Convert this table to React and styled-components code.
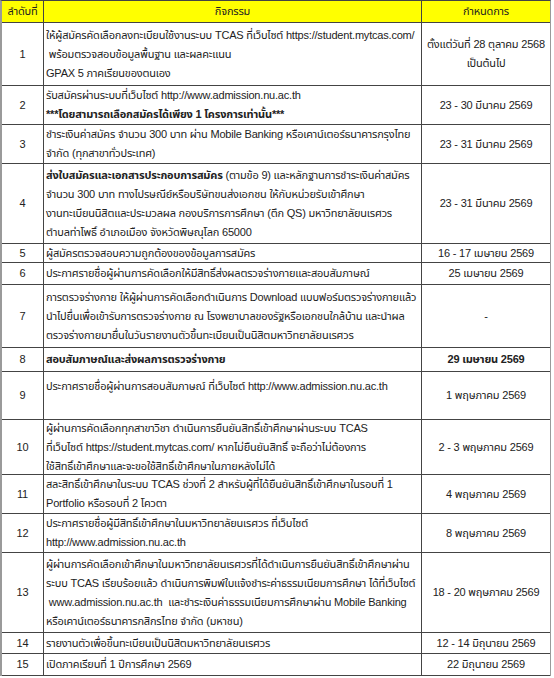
import React from 'react';
import styled, { createGlobalStyle } from 'styled-components';

const GlobalStyle = createGlobalStyle`
  html, body {
    margin: 0;
    padding: 0;
    background: #ffffff;
  }
  body {
    font-family: Tahoma, "Liberation Sans", "Noto Sans Thai", "Noto Sans", sans-serif;
    font-size: 11px;
    letter-spacing: -0.2px;
    color: #222222;
  }
`;

const Table = styled.div`
  width: 551px;
  border-left: 2px solid #9a9a9a;
  border-right: 1px solid #9a9a9a;
  border-top: 1px solid #444444;
  box-sizing: border-box;
`;

const Row = styled.div`
  display: grid;
  grid-template-columns: 42px 378px 1fr;
  height: ${(p) => p.$h}px;
  box-sizing: border-box;
  border-bottom: 1px solid #444444;
  background: ${(p) => (p.$head ? '#ffff00' : '#ffffff')};
`;

const Cell = styled.div`
  display: flex;
  flex-direction: column;
  justify-content: center;
  align-items: ${(p) => (p.$left ? 'flex-start' : 'center')};
  padding: 0 ${(p) => (p.$left ? '2px' : '3px')};
  border-right: ${(p) => (p.$last ? 'none' : '1px solid #444444')};
  line-height: 19px;
  white-space: pre;
  overflow: hidden;
  text-align: ${(p) => (p.$left ? 'left' : 'center')};
  font-weight: ${(p) => (p.$bold ? 'bold' : 'normal')};
`;

const Line = styled.div`
  min-height: 19px;
  font-weight: ${(p) => (p.$bold ? 'bold' : 'inherit')};
`;

const Strong = styled.span`
  font-weight: bold;
`;

const rows = [
  {
    no: '1',
    h: 63,
    text: [
      'ให้ผู้สมัครคัดเลือกลงทะเบียนใช้งานระบบ TCAS ที่เว็บไซต์ https://student.mytcas.com/',
      ' พร้อมตรวจสอบข้อมูลพื้นฐาน และผลคะแนน',
      'GPAX 5 ภาคเรียนของตนเอง',
    ],
    date: ['ตั้งแต่วันที่ 28 ตุลาคม 2568', 'เป็นต้นไป'],
  },
  {
    no: '2',
    h: 39,
    text: [
      'รับสมัครผ่านระบบที่เว็บไซต์ http://www.admission.nu.ac.th',
      { bold: true, t: '***โดยสามารถเลือกสมัครได้เพียง 1 โครงการเท่านั้น***' },
    ],
    date: ['23 - 30 มีนาคม 2569'],
  },
  {
    no: '3',
    h: 39,
    text: [
      'ชำระเงินค่าสมัคร จำนวน 300 บาท ผ่าน Mobile Banking หรือเคาน์เตอร์ธนาคารกรุงไทย',
      'จำกัด (ทุกสาขาทั่วประเทศ)',
    ],
    date: ['23 - 31 มีนาคม 2569'],
  },
  {
    no: '4',
    h: 80,
    text: [
      { lead: 'ส่งใบสมัครและเอกสารประกอบการสมัคร', t: ' (ตามข้อ 9) และหลักฐานการชำระเงินค่าสมัคร' },
      'จำนวน 300 บาท ทางไปรษณีย์หรือบริษัทขนส่งเอกชน ให้กับหน่วยรับเข้าศึกษา',
      'งานทะเบียนนิสิตและประมวลผล กองบริการการศึกษา (ตึก QS) มหาวิทยาลัยนเรศวร',
      'ตำบลท่าโพธิ์ อำเภอเมือง จังหวัดพิษณุโลก 65000',
    ],
    date: ['23 - 31 มีนาคม 2569'],
  },
  {
    no: '5',
    h: 19,
    text: ['ผู้สมัครตรวจสอบความถูกต้องของข้อมูลการสมัคร'],
    date: ['16 - 17 เมษายน 2569'],
  },
  {
    no: '6',
    h: 22,
    text: ['ประกาศรายชื่อผู้ผ่านการคัดเลือกให้มีสิทธิ์ส่งผลตรวจร่างกายและสอบสัมภาษณ์'],
    date: ['25 เมษายน 2569'],
  },
  {
    no: '7',
    h: 63,
    text: [
      'การตรวจร่างกาย ให้ผู้ผ่านการคัดเลือกดำเนินการ Download แบบฟอร์มตรวจร่างกายแล้ว',
      'นำไปยื่นเพื่อเข้ารับการตรวจร่างกาย ณ โรงพยาบาลของรัฐหรือเอกชนใกล้บ้าน และนำผล',
      'ตรวจร่างกายมายื่นในวันรายงานตัวขึ้นทะเบียนเป็นนิสิตมหาวิทยาลัยนเรศวร',
    ],
    date: ['-'],
  },
  {
    no: '8',
    h: 24,
    bold: true,
    text: ['สอบสัมภาษณ์และส่งผลการตรวจร่างกาย'],
    date: ['29 เมษายน 2569'],
  },
  {
    no: '9',
    h: 48,
    text: ['ประกาศรายชื่อผู้ผ่านการสอบสัมภาษณ์ ที่เว็บไซต์ http://www.admission.nu.ac.th', ''],
    date: ['1 พฤษภาคม 2569'],
  },
  {
    no: '10',
    h: 55,
    text: [
      'ผู้ผ่านการคัดเลือกทุกสาขาวิชา ดำเนินการยืนยันสิทธิ์เข้าศึกษาผ่านระบบ TCAS',
      'ที่เว็บไซต์ https://student.mytcas.com/ หากไม่ยืนยันสิทธิ์ จะถือว่าไม่ต้องการ',
      'ใช้สิทธิ์เข้าศึกษาและจะขอใช้สิทธิ์เข้าศึกษาในภายหลังไม่ได้',
    ],
    date: ['2 - 3 พฤษภาคม 2569'],
  },
  {
    no: '11',
    h: 39,
    text: [
      'สละสิทธิ์เข้าศึกษาในระบบ TCAS ช่วงที่ 2 สำหรับผู้ที่ได้ยืนยันสิทธิ์เข้าศึกษาในรอบที่ 1',
      'Portfolio หรือรอบที่ 2 โควตา',
    ],
    date: ['4 พฤษภาคม 2569'],
  },
  {
    no: '12',
    h: 39,
    text: [
      'ประกาศรายชื่อผู้มีสิทธิ์เข้าศึกษาในมหาวิทยาลัยนเรศวร ที่เว็บไซต์',
      'http://www.admission.nu.ac.th',
    ],
    date: ['8 พฤษภาคม 2569'],
  },
  {
    no: '13',
    h: 80,
    text: [
      'ผู้ผ่านการคัดเลือกเข้าศึกษาในมหาวิทยาลัยนเรศวรที่ได้ดำเนินการยืนยันสิทธิ์เข้าศึกษาผ่าน',
      'ระบบ TCAS เรียบร้อยแล้ว ดำเนินการพิมพ์ใบแจ้งชำระค่าธรรมเนียมการศึกษา ได้ที่เว็บไซต์',
      ' www.admission.nu.ac.th  และชำระเงินค่าธรรมเนียมการศึกษาผ่าน Mobile Banking',
      'หรือเคาน์เตอร์ธนาคารกสิกรไทย จำกัด (มหาชน)',
    ],
    date: ['18 - 20 พฤษภาคม 2569'],
  },
  {
    no: '14',
    h: 21,
    text: ['รายงานตัวเพื่อขึ้นทะเบียนเป็นนิสิตมหาวิทยาลัยนเรศวร'],
    date: ['12 - 14 มิถุนายน 2569'],
  },
  {
    no: '15',
    h: 22,
    text: ['เปิดภาคเรียนที่ 1 ปีการศึกษา 2569'],
    date: ['22 มิถุนายน 2569'],
  },
];

function TextLine({ item }) {
  if (typeof item === 'string') return <Line>{item}</Line>;
  if (item.lead) {
    return (
      <Line>
        <Strong>{item.lead}</Strong>
        {item.t}
      </Line>
    );
  }
  return <Line $bold={item.bold}>{item.t}</Line>;
}

export default function App() {
  return (
    <>
      <GlobalStyle />
      <Table>
        <Row $h={22} $head>
          <Cell>ลำดับที่</Cell>
          <Cell>กิจกรรม</Cell>
          <Cell $last>กำหนดการ</Cell>
        </Row>
        {rows.map((r) => (
          <Row key={r.no} $h={r.h}>
            <Cell>{r.no}</Cell>
            <Cell $left $bold={r.bold}>
              {r.text.map((item, i) => (
                <TextLine key={i} item={item} />
              ))}
            </Cell>
            <Cell $last $bold={r.bold}>
              {r.date.map((d, i) => (
                <Line key={i}>{d}</Line>
              ))}
            </Cell>
          </Row>
        ))}
      </Table>
    </>
  );
}
